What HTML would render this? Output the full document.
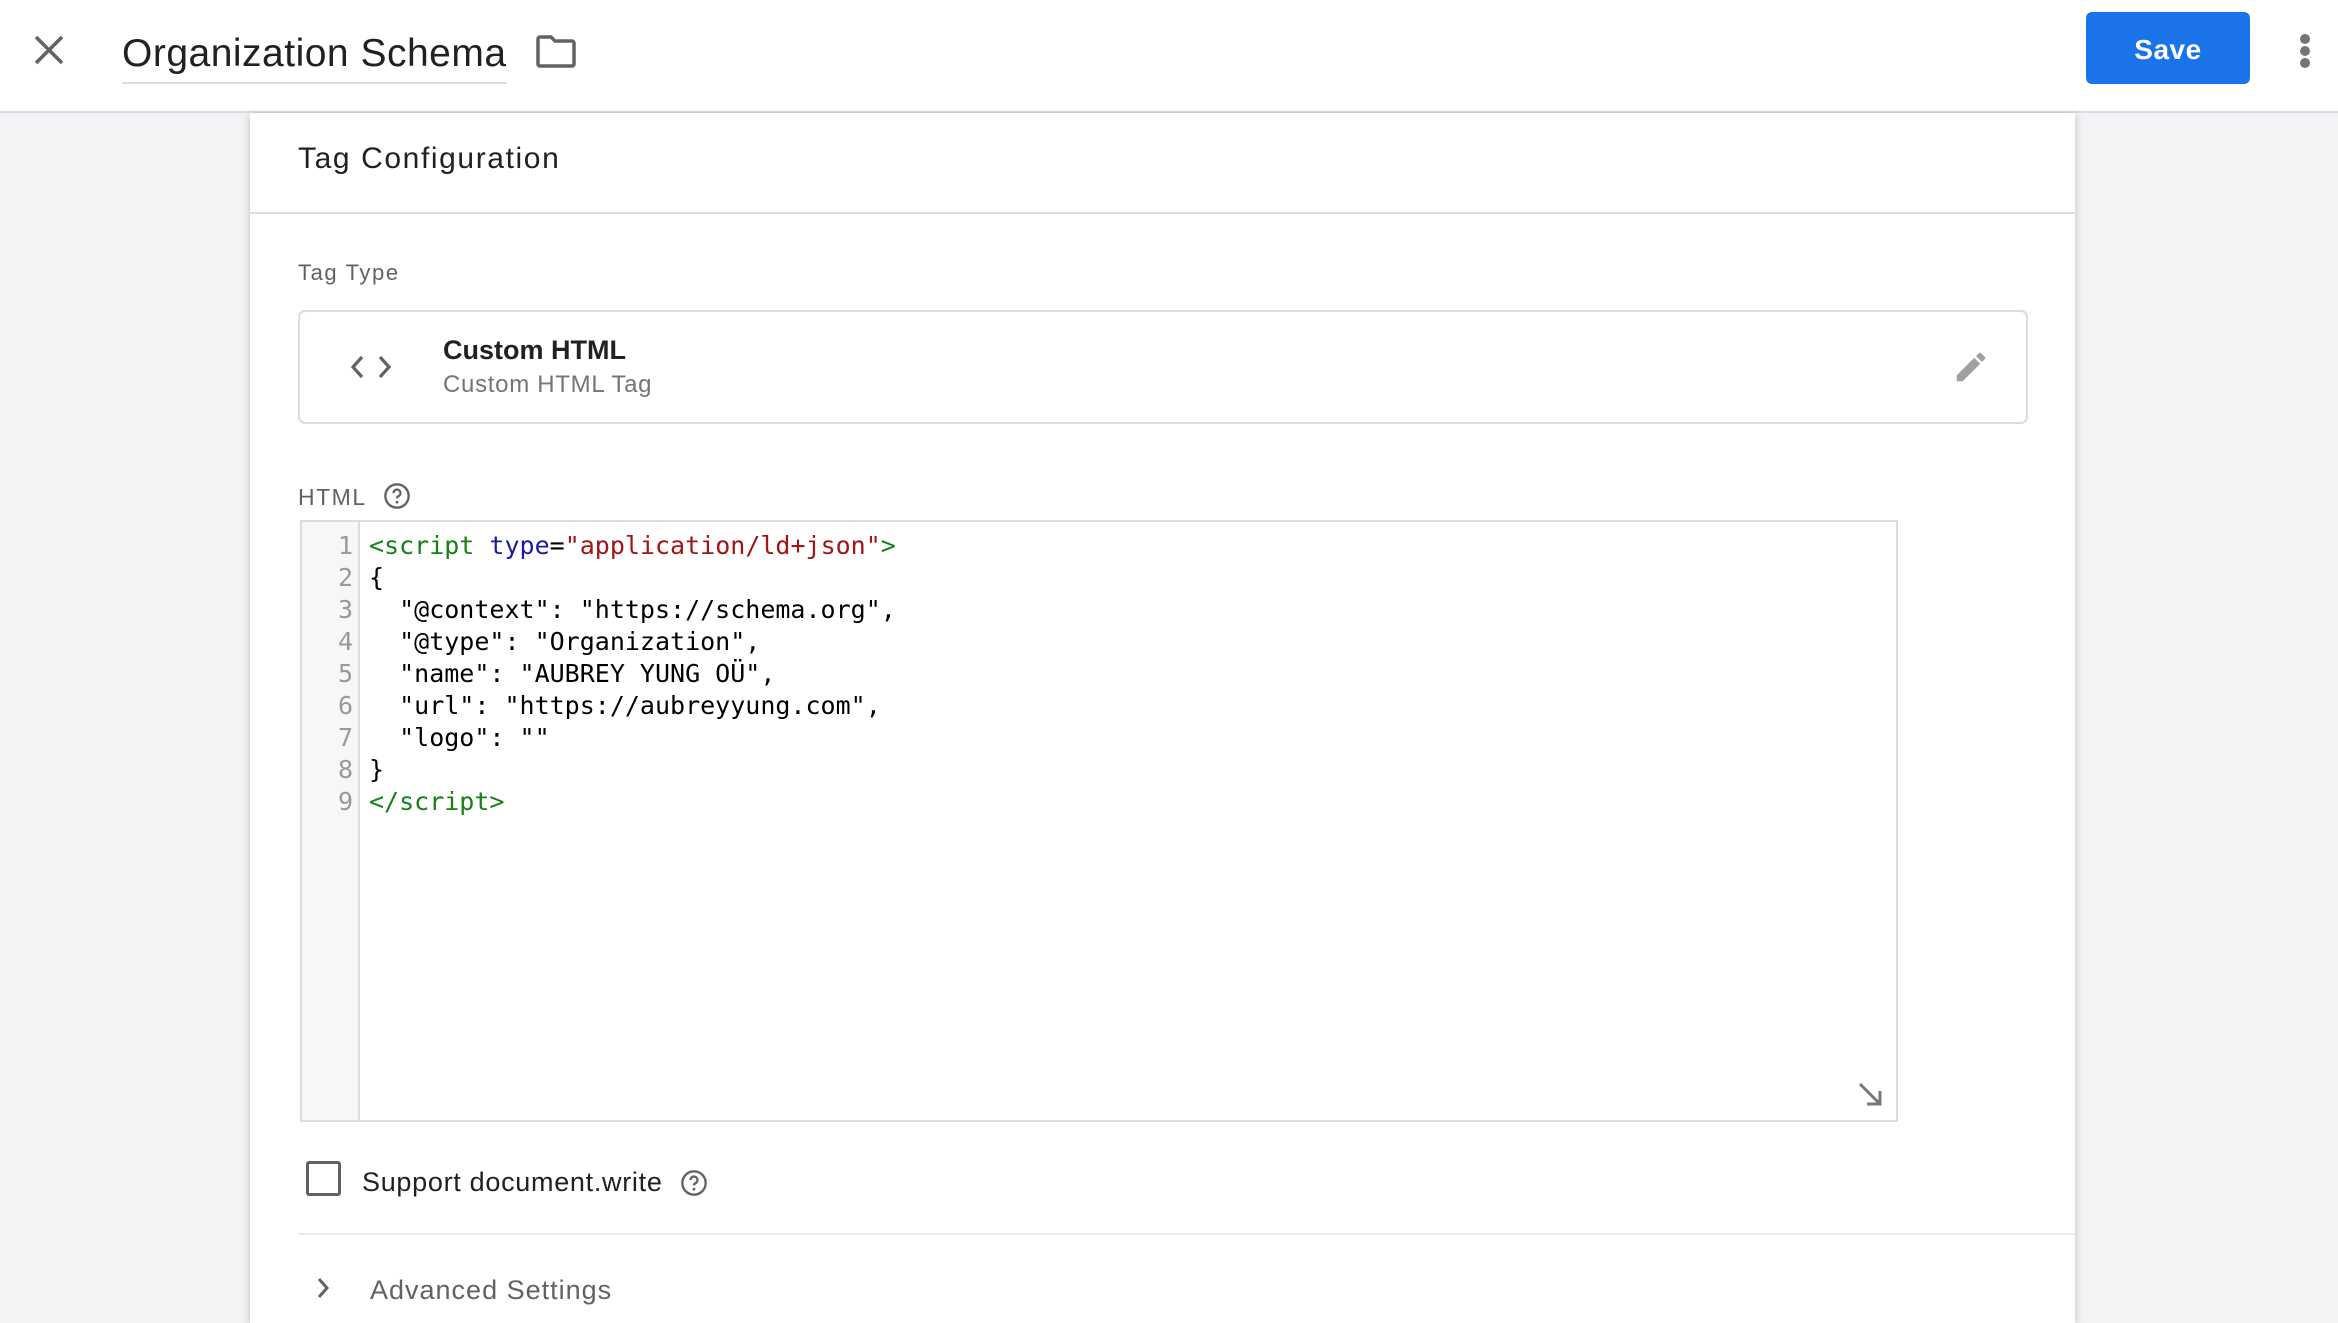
<!DOCTYPE html>
<html><head><meta charset="utf-8"><style>
*{box-sizing:border-box;margin:0;padding:0}
body{width:2338px;height:1316px;overflow:hidden;background:#f1f3f4;font-family:"Liberation Sans",sans-serif;position:relative;color:#202124}
.abs{position:absolute}
#hdr{left:0;top:0;width:2338px;height:113px;background:#fff;border-bottom:2px solid #dadce0}
.t{white-space:nowrap;line-height:1}
#card{left:250px;top:113px;width:1825px;height:1210px;background:#fff;box-shadow:0 2px 8px rgba(0,0,0,.22)}
.code{font-family:"DejaVu Sans Mono","Liberation Mono",monospace;font-size:25px;line-height:32px;white-space:pre}
.g{color:#178017}.b{color:#1a1aa6}.r{color:#a31515}
</style></head><body>
<div id="hdr" class="abs">
<svg class="abs" style="left:33px;top:34px" width="32" height="32" viewBox="0 0 32 32"><path d="M3 3L29 29M29 3L3 29" stroke="#5f6368" stroke-width="3.5"/></svg>
<div class="abs t" style="left:122px;top:34px;font-size:39px;color:#202124;letter-spacing:0.5px">Organization Schema</div>
<div class="abs" style="left:122px;top:82px;width:385px;height:2px;background:#dadce0"></div>
<svg class="abs" style="left:536px;top:35px" width="40" height="33" viewBox="0 0 40 33"><path d="M2 4a2 2 0 0 1 2-2h11l4 4h17a2 2 0 0 1 2 2v21a2 2 0 0 1-2 2H4a2 2 0 0 1-2-2z" fill="none" stroke="#5f6368" stroke-width="3.5"/></svg>
<div class="abs" style="left:2086px;top:12px;width:164px;height:72px;background:#1a73e8;border-radius:6px;color:#fff;font-size:28px;text-align:center;line-height:76px;font-weight:bold;letter-spacing:0.5px">Save</div>
<div class="abs" style="left:2300px;top:34px;width:10px;height:10px;border-radius:5px;background:#757575"></div>
<div class="abs" style="left:2300px;top:46px;width:10px;height:10px;border-radius:5px;background:#757575"></div>
<div class="abs" style="left:2300px;top:58px;width:10px;height:10px;border-radius:5px;background:#757575"></div>
</div>
<div id="card" class="abs"></div>
<div class="abs t" style="left:298px;top:144px;font-size:30px;letter-spacing:1.6px">Tag Configuration</div>
<div class="abs" style="left:250px;top:212px;width:1825px;height:2px;background:#dadce0"></div>
<div class="abs t" style="left:298px;top:262px;font-size:22px;color:#5f6368;letter-spacing:1.6px">Tag Type</div>
<div class="abs" style="left:298px;top:310px;width:1730px;height:114px;border:2px solid #dadce0;border-radius:7px"></div>
<svg class="abs" style="left:350px;top:354px" width="42" height="26" viewBox="0 0 42 26"><path d="M12 3L3 13L12 23M30 3L39 13L30 23" fill="none" stroke="#5f6368" stroke-width="3.2"/></svg>
<div class="abs t" style="left:443px;top:337px;font-size:27px;font-weight:bold;color:#202124">Custom HTML</div>
<div class="abs t" style="left:443px;top:373px;font-size:24px;color:#757575;letter-spacing:0.7px">Custom HTML Tag</div>
<svg class="abs" style="left:1952px;top:348px" width="38" height="38" viewBox="0 0 24 24"><path d="M3 17.25V21h3.75L17.81 9.94l-3.75-3.75L3 17.25zM20.71 7.04a1 1 0 0 0 0-1.41l-2.34-2.34a1 1 0 0 0-1.41 0l-1.83 1.83 3.75 3.75 1.83-1.83z" fill="#a0a0a0"/></svg>
<div class="abs t" style="left:298px;top:486px;font-size:23px;color:#5f6368;letter-spacing:1.5px">HTML</div>
<svg class="abs" style="left:383px;top:482px" width="28" height="28" viewBox="0 0 24 24"><circle cx="12" cy="12" r="10" fill="none" stroke="#5f6368" stroke-width="2"/><path d="M9 9.5a3 3 0 1 1 4 2.8c-.8.4-1 .9-1 1.7" fill="none" stroke="#5f6368" stroke-width="2"/><circle cx="12" cy="17.3" r="1.2" fill="#5f6368"/></svg>
<div class="abs" style="left:300px;top:520px;width:1598px;height:602px;border:2px solid #dadce0;background:#fff"></div>
<div class="abs" style="left:302px;top:522px;width:58px;height:598px;background:#f7f7f7;border-right:2px solid #dddddd"></div>
<div class="abs code" style="left:302px;top:530px;width:51px;text-align:right;color:#999">1
2
3
4
5
6
7
8
9</div>
<div class="abs code" style="left:369px;top:530px;color:#000"><span class="g">&lt;script</span> <span class="b">type</span>=<span class="r">"application/ld+json"</span><span class="g">&gt;</span>
{
  "@context": "https://schema.org",
  "@type": "Organization",
  "name": "AUBREY YUNG OÜ",
  "url": "https://aubreyyung.com",
  "logo": ""
}
<span class="g">&lt;/script&gt;</span></div>
<svg class="abs" style="left:1856px;top:1080px" width="28" height="28" viewBox="0 0 28 28"><path d="M4 4L24 24M24 11V24H11" fill="none" stroke="#777" stroke-width="3"/></svg>
<div class="abs" style="left:306px;top:1161px;width:35px;height:35px;border:3px solid #5f6368;border-radius:3px"></div>
<div class="abs t" style="left:362px;top:1169px;font-size:27px;letter-spacing:0.7px">Support document.write</div>
<svg class="abs" style="left:680px;top:1169px" width="28" height="28" viewBox="0 0 24 24"><circle cx="12" cy="12" r="10" fill="none" stroke="#5f6368" stroke-width="2"/><path d="M9 9.5a3 3 0 1 1 4 2.8c-.8.4-1 .9-1 1.7" fill="none" stroke="#5f6368" stroke-width="2"/><circle cx="12" cy="17.3" r="1.2" fill="#5f6368"/></svg>
<div class="abs" style="left:298px;top:1233px;width:1777px;height:2px;background:#e8eaed"></div>
<svg class="abs" style="left:314px;top:1276px" width="18" height="24" viewBox="0 0 18 24"><path d="M5 3L13 12L5 21" fill="none" stroke="#5f6368" stroke-width="3"/></svg>
<div class="abs t" style="left:370px;top:1277px;font-size:27px;color:#5f6368;letter-spacing:1px">Advanced Settings</div>
</body></html>
